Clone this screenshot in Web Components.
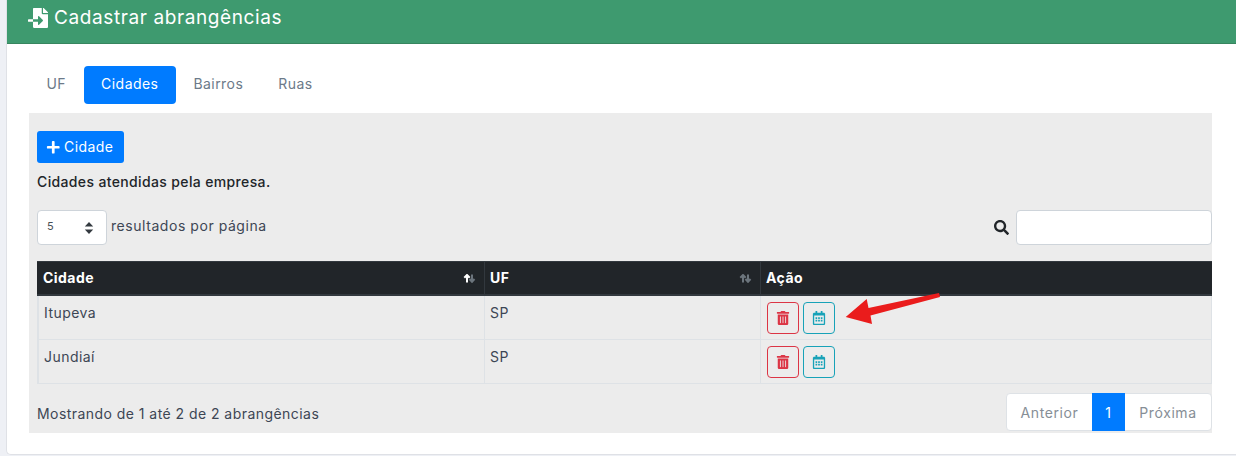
<!DOCTYPE html>
<html lang="pt-BR">
<head>
<meta charset="utf-8">
<title>Cadastrar abrangências</title>
<style>
  html, body { margin: 0; height: 456px; overflow: hidden; }
  body {
    background: #eef0f5;
    color: #212529;
    font: 14px/21px Inter, "Open Sans", sans-serif;
    letter-spacing: .45px;
  }
</style>
</head>
<body>
<ab-card heading="Cadastrar abrangências">
  <ab-tabs>
    <ab-tab>UF</ab-tab>
    <ab-tab active>Cidades</ab-tab>
    <ab-tab>Bairros</ab-tab>
    <ab-tab>Ruas</ab-tab>
  </ab-tabs>
  <ab-panel>
    <ab-add-button>Cidade</ab-add-button>
    <ab-note>Cidades atendidas pela empresa.</ab-note>
    <ab-controls></ab-controls>
    <ab-table>
      <ab-row city="Itupeva" uf="SP"></ab-row>
      <ab-row city="Jundiaí" uf="SP"></ab-row>
    </ab-table>
    <ab-footer>Mostrando de 1 até 2 de 2 abrangências</ab-footer>
  </ab-panel>
</ab-card>

<script>
'use strict';

const ICONS = {
  fileImport: ['0 0 512 512', 'M16 288c-8.8 0-16 7.2-16 16v32c0 8.8 7.2 16 16 16h112v-64zm489-183L407.1 7c-4.5-4.5-10.6-7-17-7H384v128h128v-6.1c0-6.3-2.5-12.4-7-16.9zm-153 31V0H152c-13.3 0-24 10.7-24 24v264h128v-65.2c0-14.3 17.3-21.4 27.4-11.3L379 308c6.6 6.7 6.6 17.4 0 24l-95.7 96.4c-10.1 10.1-27.4 3-27.4-11.3V352H128v136c0 13.3 10.7 24 24 24h336c13.3 0 24-10.7 24-24V160H376c-13.2 0-24-10.8-24-24z'],
  plus: ['0 0 448 512', 'M416 208H272V64c0-17.67-14.33-32-32-32h-32c-17.67 0-32 14.33-32 32v144H32c-17.67 0-32 14.33-32 32v32c0 17.67 14.33 32 32 32h144v144c0 17.67 14.33 32 32 32h32c17.67 0 32-14.33 32-32V304h144c17.67 0 32-14.33 32-32v-32c0-17.67-14.33-32-32-32z'],
  search: ['0 0 512 512', 'M505 442.7L405.3 343c-4.5-4.5-10.6-7-17-7H372c27.6-35.3 44-79.7 44-128C416 93.1 322.9 0 208 0S0 93.1 0 208s93.1 208 208 208c48.3 0 92.7-16.4 128-44v16.3c0 6.4 2.5 12.5 7 17l99.7 99.7c9.4 9.4 24.6 9.4 33.9 0l28.3-28.3c9.4-9.4 9.4-24.6.1-34zM208 336c-70.7 0-128-57.2-128-128 0-70.7 57.2-128 128-128 70.7 0 128 57.2 128 128 0 70.7-57.2 128-128 128z'],
  trash: ['0 0 448 512', 'M32 464a48 48 0 0 0 48 48h288a48 48 0 0 0 48-48V128H32zm272-256a16 16 0 0 1 32 0v224a16 16 0 0 1-32 0zm-96 0a16 16 0 0 1 32 0v224a16 16 0 0 1-32 0zm-96 0a16 16 0 0 1 32 0v224a16 16 0 0 1-32 0zM432 32H312l-9.4-18.7A24 24 0 0 0 281.1 0H166.8a23.72 23.72 0 0 0-21.4 13.3L136 32H16A16 16 0 0 0 0 48v32a16 16 0 0 0 16 16h416a16 16 0 0 0 16-16V48a16 16 0 0 0-16-16z'],
  calendar: ['0 0 448 512', 'M148 288h-40c-6.6 0-12-5.4-12-12v-40c0-6.6 5.4-12 12-12h40c6.6 0 12 5.4 12 12v40c0 6.6-5.4 12-12 12zm108-12v-40c0-6.6-5.4-12-12-12h-40c-6.6 0-12 5.4-12 12v40c0 6.6 5.4 12 12 12h40c6.6 0 12-5.4 12-12zm96 0v-40c0-6.6-5.4-12-12-12h-40c-6.6 0-12 5.4-12 12v40c0 6.6 5.4 12 12 12h40c6.6 0 12-5.4 12-12zm-96 96v-40c0-6.6-5.4-12-12-12h-40c-6.6 0-12 5.4-12 12v40c0 6.6 5.4 12 12 12h40c6.6 0 12-5.4 12-12zm-96 0v-40c0-6.6-5.4-12-12-12h-40c-6.6 0-12 5.4-12 12v40c0 6.6 5.4 12 12 12h40c6.6 0 12-5.4 12-12zm192 0v-40c0-6.6-5.4-12-12-12h-40c-6.6 0-12 5.4-12 12v40c0 6.6 5.4 12 12 12h40c6.6 0 12-5.4 12-12zm96-260v352c0 26.5-21.5 48-48 48H48c-26.5 0-48-21.5-48-48V112c0-26.5 21.5-48 48-48h48V12c0-6.6 5.4-12 12-12h40c6.6 0 12 5.4 12 12v52h128V12c0-6.6 5.4-12 12-12h40c6.6 0 12 5.4 12 12v52h48c26.5 0 48 21.5 48 48zm-48 346V160H48v298c0 3.3 2.7 6 6 6h340c3.3 0 6-2.7 6-6z']
};

function icon(name, size) {
  const [box, d] = ICONS[name];
  return `<svg width="${size}" height="${size}" viewBox="${box}" fill="currentColor" aria-hidden="true"><path d="${d}"/></svg>`;
}

class Shadowed extends HTMLElement {
  constructor() {
    super();
    this.attachShadow({ mode: 'open' });
  }
  connectedCallback() {
    this.shadowRoot.innerHTML = this.render();
  }
}

class AbCard extends Shadowed {
  render() {
    return `<style>
      :host { display: block; height: 455px; margin-left: 6px; background: #fff; border: solid #dfe1e6; border-width: 0 0 1px 1px; border-radius: 0 0 0 5px; box-sizing: border-box; }
      header { display: flex; align-items: center; gap: 6px; height: 44px; box-sizing: border-box; padding: 0 0 8px 21px; background: #3e9a6f; border-bottom: 1px solid #37855f; color: #fff; font-size: 19px; line-height: 36px; letter-spacing: .6px; }
      main { display: block; padding: 22px 24px 0 22px; }
    </style>
    <header>${icon('fileImport', 20)}<span>${this.getAttribute('heading')}</span></header>
    <main><slot></slot></main>`;
  }
}

class AbTabs extends Shadowed {
  render() {
    return `<style>:host { display: flex; height: 38px; margin-bottom: 9px; }</style><slot></slot>`;
  }
}

class AbTab extends Shadowed {
  render() {
    return `<style>
      :host { display: block; padding: 7px 17.5px 9px; line-height: 21px; border-radius: 4px; color: #6c7a89; }
      :host([active]) { background: #007bff; color: #fff; }
    </style><slot></slot>`;
  }
}

class AbPanel extends Shadowed {
  render() {
    return `<style>
      :host { display: block; height: 320px; box-sizing: border-box; padding: 18px 0 0 8px; background: #ececec; }
    </style><slot></slot>`;
  }
}

class AbAddButton extends Shadowed {
  render() {
    return `<style>
      :host { display: inline-flex; align-items: center; gap: 3.5px; height: 32px; width: 87px; box-sizing: border-box; padding: 0 0 2px 9px; background: #007bff; color: #fff; border-radius: 3px; }
      svg { margin-top: 2px; }
    </style>${icon('plus', 14.5)}<span><slot></slot></span>`;
  }
}

class AbNote extends Shadowed {
  render() {
    return `<style>:host { display: block; margin: 8px 0 18px; font-weight: 500; line-height: 21px; letter-spacing: .36px; }</style><slot></slot>`;
  }
}

class AbControls extends Shadowed {
  render() {
    return `<style>
      :host { display: flex; align-items: center; height: 35px; color: #3d4654; }
      .select { position: relative; width: 70px; height: 35px; box-sizing: border-box; margin-right: 4px; padding: 5px 9px; background: #fff; border: 1px solid #ced4da; border-radius: 4px; font-size: 11px; line-height: 20px; color: #495057; }
      .select svg { position: absolute; right: 12px; top: 10px; }
      .label { padding-bottom: 4px; letter-spacing: .55px; }
      .spacer { flex: 1; }
      .search { margin-right: 7px; color: #212529; display: flex; }
      .input { width: 196px; height: 35px; box-sizing: border-box; background: #fff; border: 1px solid #ced4da; border-radius: 4px; }
    </style>
    <div class="select">5<svg width="10" height="14" viewBox="0 0 10 14" fill="#343a40"><path d="M5 1l4.2 4.6H.8zM5 13L.8 8.400h8.400z"/></svg></div>
    <span class="label">resultados por página</span>
    <div class="spacer"></div>
    <span class="search">${icon('search', 15)}</span>
    <div class="input"></div>`;
  }
}

function sortArrows(upColor, downColor) {
  return `<svg width="13" height="9" viewBox="0 0 13 9" fill="none" stroke-width="2">
    <path d="M9 .5v6.500M6.500 5L9 7.800 11.500 5" stroke="${downColor}"/>
    <path d="M4 8.500V1.800M1.300 3.800L4 1l2.700 2.800" stroke="${upColor}"/>
  </svg>`;
}

class AbTable extends Shadowed {
  render() {
    return `<style>
      :host { display: block; width: 1175px; margin-top: 16px; color: #3d4654; }
      .head { display: grid; grid-template-columns: 447px 276px 1fr; height: 35px; box-sizing: border-box; background: #212529; border-top: 1px solid #32383e; border-bottom: 2px solid #32383e; color: #fff; font-weight: 700; line-height: 30px; }
      .head div { display: flex; align-items: center; justify-content: space-between; padding: 0 8px 0 5px; border-left: 1px solid #32383e; }
      .head div:first-child { border-left: 0; padding-left: 6px; }
    </style>
    <div class="head">
      <div>Cidade${sortArrows('#fff', '#6c757d')}</div>
      <div>UF${sortArrows('#6c757d', '#6c757d')}</div>
      <div>Ação</div>
    </div>
    <slot></slot>`;
  }
}

class AbRow extends Shadowed {
  render() {
    return `<style>
      :host { display: grid; grid-template-columns: 446px 276px 1fr; height: 44px; box-sizing: border-box; border: solid #dee2e6; border-width: 0 1px 1px 1px; }
      .cell { padding: 6px 5px; border-left: 1px solid #dee2e6; line-height: 21px; }
      .cell:first-child { border-left: 0; }
      .actions { display: flex; gap: 4px; padding: 6px 6px 0; }
      .btn { display: flex; align-items: center; justify-content: center; width: 32px; height: 32px; box-sizing: border-box; border: 1px solid; border-radius: 4px; }
      .danger { color: #dc3545; }
      .info { color: #17a2b8; }
    </style>
    <div class="cell">${this.getAttribute('city')}</div>
    <div class="cell">${this.getAttribute('uf')}</div>
    <div class="cell actions">
      <span class="btn danger">${icon('trash', 14)}</span>
      <span class="btn info">${icon('calendar', 14)}</span>
    </div>`;
  }
}

class AbFooter extends Shadowed {
  render() {
    return `<style>
      :host { display: flex; align-items: center; justify-content: space-between; width: 1175px; height: 38px; margin-top: 9px; color: #3d4654; }
      .info { padding-top: 2px; }
      nav { display: flex; height: 38px; line-height: 37px; background: #fff; border: 1px solid #dee2e6; border-radius: 4px; box-sizing: border-box; color: #868e96; text-align: center; letter-spacing: .6px; }
      nav span { width: 85px; }
      nav .on { width: 33px; margin: -1px 0; padding: 1px 0; background: #007bff; color: #fff; }
      nav .next { width: 86px; }
    </style>
    <span class="info"><slot></slot></span>
    <nav><span>Anterior</span><span class="on">1</span><span class="next">Próxima</span></nav>`;
  }
}

class AbArrow extends Shadowed {
  render() {
    return `<style>
      :host { position: absolute; left: 844px; top: 292px; width: 98px; height: 34px; }
    </style>
    <svg width="98" height="34" viewBox="0 0 98 34"><path d="M1.700 25L22.700 7l1.800 9L95 1l1 4-69.500 18.500L28 32z" fill="#ea1c1c"/></svg>`;
  }
}

customElements.define('ab-card', AbCard);
customElements.define('ab-tabs', AbTabs);
customElements.define('ab-tab', AbTab);
customElements.define('ab-panel', AbPanel);
customElements.define('ab-add-button', AbAddButton);
customElements.define('ab-note', AbNote);
customElements.define('ab-controls', AbControls);
customElements.define('ab-table', AbTable);
customElements.define('ab-row', AbRow);
customElements.define('ab-footer', AbFooter);
customElements.define('ab-arrow', AbArrow);

document.body.appendChild(document.createElement('ab-arrow'));
</script>
</body>
</html>
